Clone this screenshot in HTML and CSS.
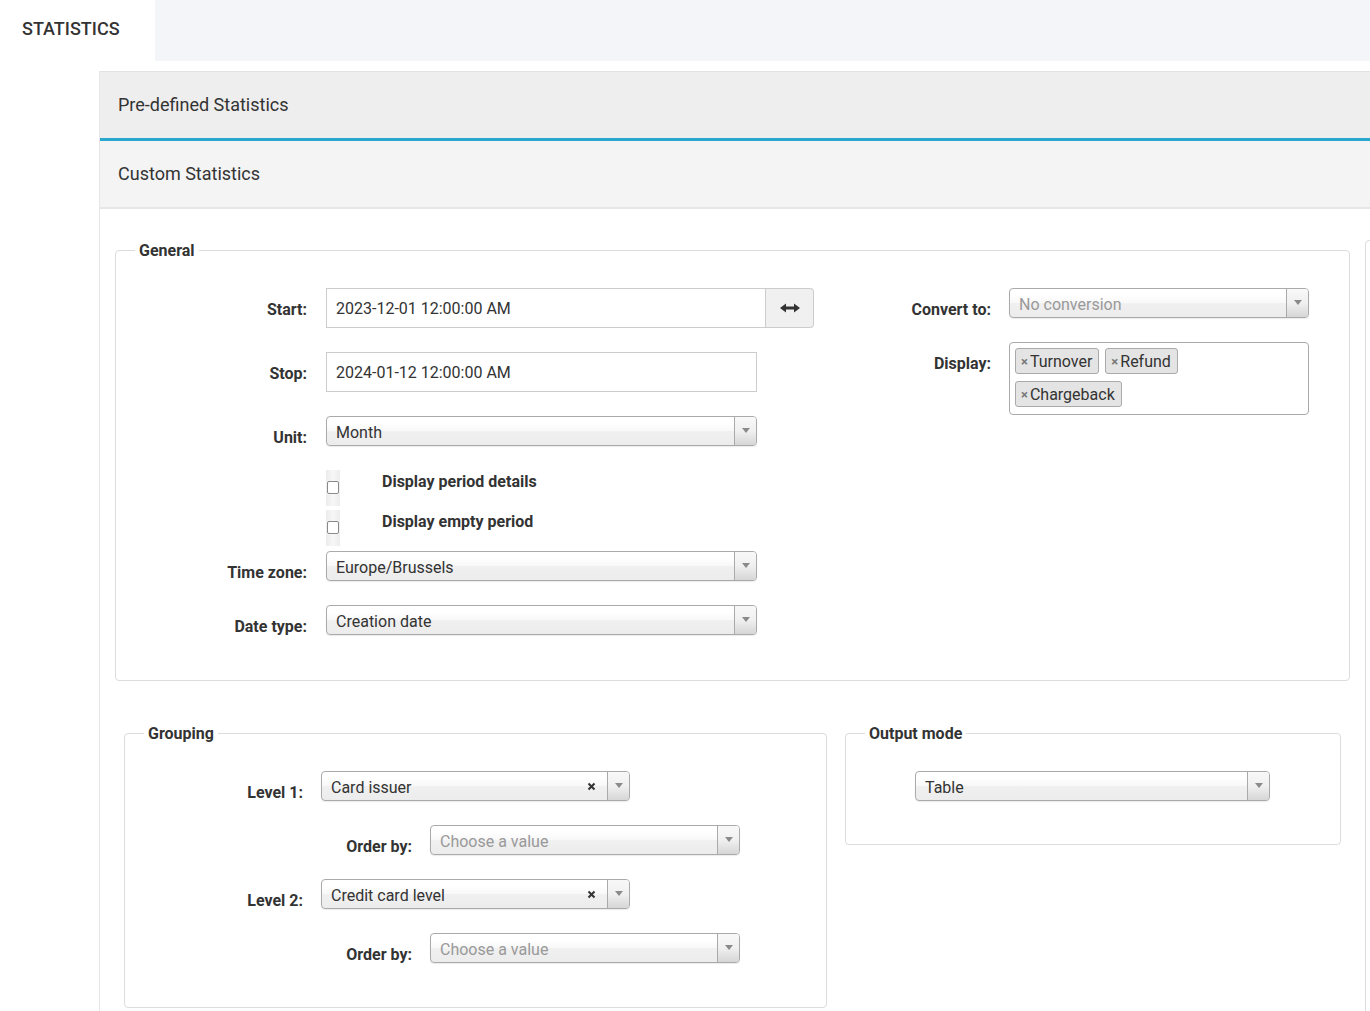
FILE: index.html
```html
<!DOCTYPE html>
<html lang="en">
<head>
<meta charset="utf-8">
<title>Statistics</title>
<link rel="stylesheet" href="styles.css">
</head>
<body>
<header class="topbar">
  <div class="tab">STATISTICS</div>
  <div class="topbar-fill"></div>
</header>

<main class="main">
  <div class="panel panel-closed">Pre-defined Statistics</div>
  <div class="panel panel-open">Custom Statistics</div>

  <div class="panel-body">
    <fieldset class="box box-general">
      <legend>General</legend>
      <div class="general-cols">
        <div class="col-left">
          <div class="form-row">
            <div class="form-label">Start:</div>
            <div class="input-group">
              <div class="input input-start">2023-12-01 12:00:00 AM</div>
              <div class="input-btn">
                <svg width="20" height="10" viewBox="0 0 20 10"><path d="M0 5 L6 0.5 L6 3.5 L14 3.5 L14 0.5 L20 5 L14 9.5 L14 6.5 L6 6.5 L6 9.5 Z" fill="#333"/></svg>
              </div>
            </div>
          </div>
          <div class="form-row">
            <div class="form-label">Stop:</div>
            <div class="input input-stop">2024-01-12 12:00:00 AM</div>
          </div>
          <div class="form-row">
            <div class="form-label">Unit:</div>
            <div class="chosen w431"><span class="chosen-text">Month</span><span class="chosen-arrow"><i class="tri"></i></span></div>
          </div>
          <div class="form-row check-row">
            <div></div>
            <div class="check-field"><span class="check"><span class="check-box"></span></span><span class="check-label">Display period details</span></div>
          </div>
          <div class="form-row check-row check-row-last">
            <div></div>
            <div class="check-field"><span class="check"><span class="check-box"></span></span><span class="check-label">Display empty period</span></div>
          </div>
          <div class="form-row">
            <div class="form-label">Time zone:</div>
            <div class="chosen w431"><span class="chosen-text">Europe/Brussels</span><span class="chosen-arrow"><i class="tri"></i></span></div>
          </div>
          <div class="form-row form-row-last">
            <div class="form-label">Date type:</div>
            <div class="chosen w431"><span class="chosen-text">Creation date</span><span class="chosen-arrow"><i class="tri"></i></span></div>
          </div>
        </div>

        <div class="col-right">
          <div class="form-row right-row">
            <div class="form-label">Convert to:</div>
            <div class="chosen w300"><span class="chosen-text placeholder">No conversion</span><span class="chosen-arrow"><i class="tri"></i></span></div>
          </div>
          <div class="form-row right-row form-row-last">
            <div class="form-label">Display:</div>
            <div class="multi">
              <span class="tag"><span class="tag-x">×</span>Turnover</span>
              <span class="tag"><span class="tag-x">×</span>Refund</span>
              <span class="tag"><span class="tag-x">×</span>Chargeback</span>
            </div>
          </div>
        </div>
      </div>
    </fieldset>

    <fieldset class="box box-extra"></fieldset>

    <div class="row-bottom">
      <fieldset class="box box-grouping">
        <legend>Grouping</legend>
        <div class="form-row group-row">
          <div class="form-label">Level 1:</div>
          <div class="chosen w309"><span class="chosen-text">Card issuer</span><span class="chosen-clear"><svg width="9" height="9" viewBox="0 0 9 9"><path d="M1.5 1.5 L7.5 7.5 M7.5 1.5 L1.5 7.5" stroke="#333" stroke-width="2"/></svg></span><span class="chosen-arrow"><i class="tri"></i></span></div>
        </div>
        <div class="form-row group-row order-row">
          <div class="form-label">Order by:</div>
          <div class="chosen w310"><span class="chosen-text placeholder">Choose a value</span><span class="chosen-arrow"><i class="tri"></i></span></div>
        </div>
        <div class="form-row group-row">
          <div class="form-label">Level 2:</div>
          <div class="chosen w309"><span class="chosen-text">Credit card level</span><span class="chosen-clear"><svg width="9" height="9" viewBox="0 0 9 9"><path d="M1.5 1.5 L7.5 7.5 M7.5 1.5 L1.5 7.5" stroke="#333" stroke-width="2"/></svg></span><span class="chosen-arrow"><i class="tri"></i></span></div>
        </div>
        <div class="form-row group-row order-row form-row-last">
          <div class="form-label">Order by:</div>
          <div class="chosen w310"><span class="chosen-text placeholder">Choose a value</span><span class="chosen-arrow"><i class="tri"></i></span></div>
        </div>
      </fieldset>

      <fieldset class="box box-output">
        <legend>Output mode</legend>
        <div class="output-field">
          <div class="chosen w355"><span class="chosen-text">Table</span><span class="chosen-arrow"><i class="tri"></i></span></div>
        </div>
      </fieldset>
    </div>
  </div>
</main>
</body>
</html>
```

FILE: styles.css
```css
* { box-sizing: border-box; }

html, body {
  margin: 0;
  padding: 0;
  background: #fff;
}

body {
  font-family: Roboto, "Liberation Sans", sans-serif;
  font-size: 16px;
  color: #333;
  overflow: hidden;
}

/* top bar */
.topbar {
  display: flex;
  height: 61px;
}
.tab {
  width: 155px;
  background: #fff;
  padding: 0 0 5px 22px;
  display: flex;
  align-items: center;
  font-size: 18px;
  font-weight: 500;
  color: #333;
}
.topbar-fill {
  flex: 1;
  background: #f4f5f9;
}

/* main */
.main {
  margin: 10px 0 0 99px;
  border-left: 1px solid #e6e6e6;
  min-height: 950px;
  overflow: hidden;
}

.panel {
  padding: 0 0 2px 18px;
  font-size: 18px;
  color: #333;
  display: flex;
  align-items: center;
}
.panel-closed {
  height: 70px;
  background: #eeeeee;
  border-top: 1px solid #e2e2e2;
  border-bottom: 3px solid #29a7cf;
}
.panel-open {
  height: 68px;
  background: #f4f4f4;
  border-bottom: 2px solid #e6e6e6;
}

.panel-body {
  padding: 31px 0 0 15px;
  display: grid;
  grid-template-columns: 1235px 300px;
  grid-template-rows: auto 1fr;
  column-gap: 15px;
  align-items: start;
}

/* fieldsets */
.box {
  margin: 0;
  border: 1px solid #dcdcdc;
  border-radius: 4px;
  padding: 27px 0 45px 19px;
  min-width: 0;
}
.box legend {
  padding: 0 4px;
  font-weight: 700;
  font-size: 16px;
  line-height: 21px;
  color: #333;
}

.box-general {
  grid-column: 1;
  grid-row: 1;
}
.box-extra {
  grid-column: 2;
  grid-row: 1 / span 2;
  height: 900px;
}

.general-cols {
  display: flex;
}
.col-left {
  width: 681px;
  flex-shrink: 0;
}
.col-right {
  flex: 1;
}

.form-row {
  display: grid;
  grid-template-columns: 172px auto;
  column-gap: 19px;
  margin-bottom: 24px;
  justify-content: start;
  align-items: start;
}
.form-row-last { margin-bottom: 0; }

.form-label {
  text-align: right;
  font-weight: 700;
  font-size: 16px;
  line-height: 18px;
  height: 30px;
  padding-top: 13px;
  color: #333;
  white-space: nowrap;
}

.right-row {
  grid-template-columns: 175px 300px;
  column-gap: 18px;
}

/* text inputs */
.input {
  height: 40px;
  border: 1px solid #ccc;
  padding: 0 9px;
  display: flex;
  align-items: center;
  font-size: 16px;
  color: #333;
  background: #fff;
}
.input-group { display: flex; }
.input-start { width: 440px; }
.input-stop { width: 431px; }
.input-btn {
  width: 48px;
  height: 40px;
  border: 1px solid #ccc;
  border-left: none;
  border-radius: 0 4px 4px 0;
  background: #f0f0f0;
  display: flex;
  align-items: center;
  justify-content: center;
}

/* chosen-like selects */
.chosen {
  height: 30px;
  border: 1px solid #aaa;
  border-radius: 4px;
  background: linear-gradient(#fff 20%, #f8f8f8 50%, #f0f0f0 52%, #ececec 100%);
  box-shadow: 0 1px 1px rgba(0, 0, 0, 0.08);
  display: flex;
  align-items: center;
  padding: 2px 0 0 9px;
  font-size: 16px;
  color: #333;
  overflow: hidden;
}
.w431 { width: 431px; }
.w300 { width: 300px; }
.w309 { width: 309px; }
.w310 { width: 310px; }
.w355 { width: 355px; }

.chosen-text {
  flex: 1;
  white-space: nowrap;
  overflow: hidden;
}
.placeholder { color: #999; }

.chosen-clear {
  width: 9px;
  height: 9px;
  display: flex;
  margin: -2px 11px 0 0;
}
.chosen-arrow {
  width: 22px;
  align-self: stretch;
  margin-top: -2px;
  border-left: 1px solid #aaa;
  background: linear-gradient(#f8f8f8, #f0f0f0 50%, #d6d6d6);
  display: flex;
  align-items: center;
  justify-content: center;
}
.tri {
  width: 0;
  height: 0;
  border-top: 5px solid #8a8a8a;
  border-left: 4px solid transparent;
  border-right: 4px solid transparent;
  margin-top: -2px;
}

/* checkboxes */
.check-row { margin-bottom: 4px; }
.check-row-last { margin-bottom: 5px; }
.check-field {
  display: flex;
  align-items: flex-start;
  height: 36px;
}
.check {
  width: 14px;
  height: 36px;
  background: linear-gradient(to right, #ececec, #f7f7f7 50%, #ececec);
  position: relative;
  display: block;
}
.check-box {
  display: block;
  position: absolute;
  left: 1px;
  top: 11px;
  width: 12px;
  height: 13px;
  border: 1px solid #8a8a8a;
  border-radius: 2px;
  background: #fff;
}
.check-label {
  margin-left: 42px;
  font-weight: 700;
  line-height: 20px;
  padding-top: 2px;
}

/* multi select */
.multi {
  width: 300px;
  border: 1px solid #aaa;
  border-radius: 4px;
  background: #fff;
  padding: 5px 24px 7px 5px;
  display: flex;
  flex-wrap: wrap;
  gap: 7px 6px;
}
.tag {
  height: 26px;
  border: 1px solid #aaa;
  border-radius: 3px;
  background: #e4e4e4;
  padding: 0 6px 0 5px;
  display: flex;
  align-items: center;
  font-size: 16px;
  color: #333;
}
.tag-x {
  color: #777;
  font-size: 13px;
  font-weight: 700;
  margin-right: 2px;
}

/* bottom row */
.row-bottom {
  grid-column: 1;
  grid-row: 2;
  display: grid;
  grid-template-columns: 703px 496px;
  column-gap: 18px;
  align-items: start;
  padding: 0 9px;
  margin-top: 42px;
}
.box-grouping {
  padding-bottom: 44px;
}
.box-output {
  padding-bottom: 43px;
}
.group-row {
  grid-template-columns: 159px auto;
  column-gap: 18px;
}
.order-row {
  margin-left: 109px;
}
.output-field {
  padding-left: 50px;
}
```
